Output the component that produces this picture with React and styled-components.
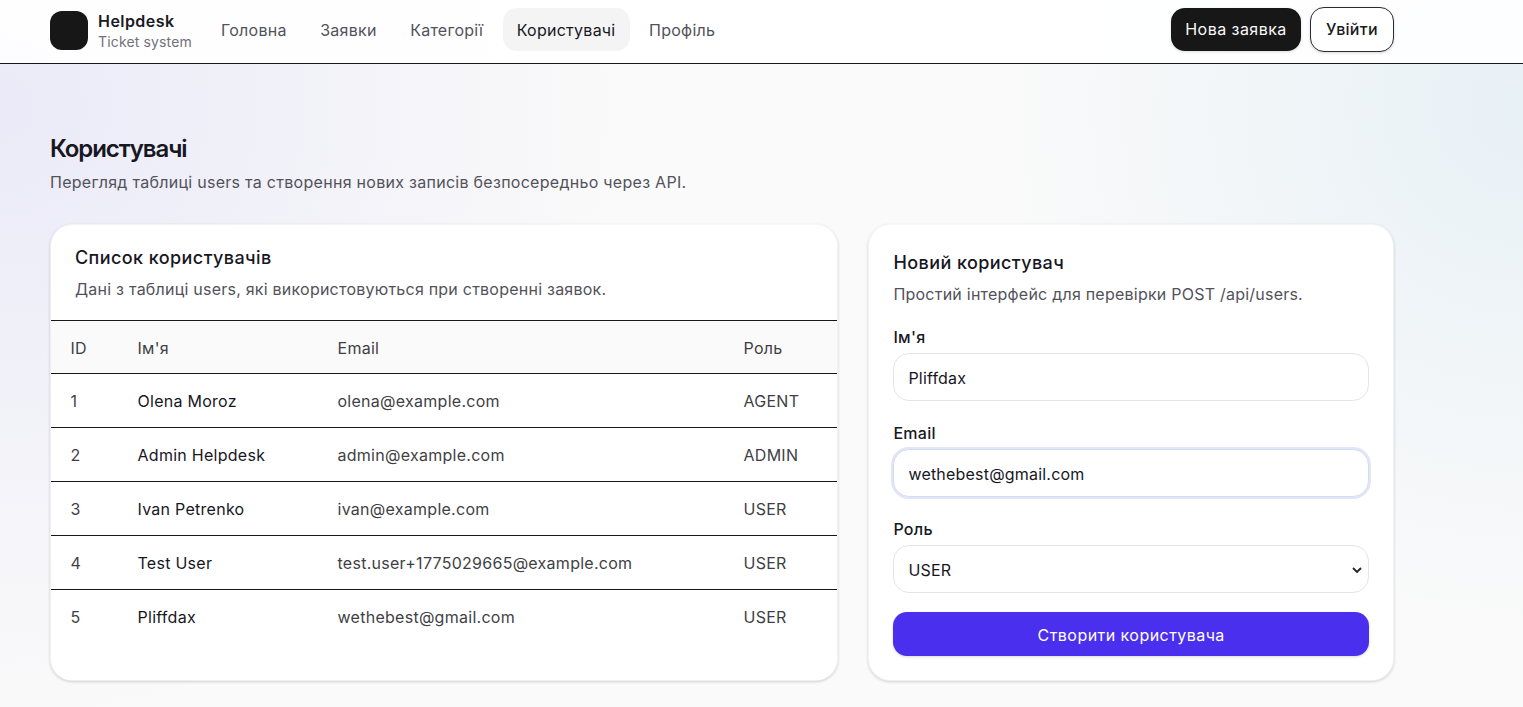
import React from "react";
import styled, { createGlobalStyle } from "styled-components";

const Global = createGlobalStyle`
  * { box-sizing: border-box; }
  html, body { margin: 0; height: 100%; }
  body {
    font-family: Inter, "Noto Sans", sans-serif;
    color: #1a1a22;
    background:
      radial-gradient(circle at 0% 15%, rgba(79, 70, 229, 0.09), transparent 38%),
      radial-gradient(circle at 100% 15%, rgba(14, 130, 200, 0.08), transparent 32%),
      #fafafa;
    min-height: 707px;
    overflow: hidden;
  }
`;

const Header = styled.header`
  height: 64px;
  background: rgba(255, 255, 255, 0.9);
  border-bottom: 1px solid #17171c;
  padding: 6px 129px 0 50px;
  display: flex;
  align-items: flex-start;
  justify-content: space-between;
`;
const Left = styled.div`display: flex; align-items: center; height: 46px;`;
const Brand = styled.div`display: flex; align-items: center; gap: 10px; margin: 2px 15px 0 0;`;
const Logo = styled.div`width: 38px; height: 39px; border-radius: 12px; background: #171717;`;
const BrandText = styled.div`display: flex; flex-direction: column; gap: 1px;`;
const BrandName = styled.div`font-size: 16px; font-weight: 600; line-height: 22px; letter-spacing: 0.45px;`;
const BrandSub = styled.div`font-size: 14px; line-height: 18px; color: #71717a; letter-spacing: 0.15px;`;
const Nav = styled.nav`display: flex; align-items: center; gap: 5.5px;`;
const NavItem = styled.a`
  padding: 1px 14px 0;
  height: 43px;
  display: flex;
  align-items: center;
  border-radius: 14px;
  font-size: 16px;
  letter-spacing: 0.26px;
  color: ${p => (p.$active ? "#17171c" : "#52525b")};
  background: ${p => (p.$active ? "#f4f4f5" : "transparent")};
`;
const Actions = styled.div`display: flex; align-items: center; gap: 9px; height: 46px;`;
const DarkButton = styled.button`
  width: 130px; height: 43px; border: 0; border-radius: 14px; background: #171717; color: #fafafa;
  font: 400 16px Inter, sans-serif; letter-spacing: 0.45px;
  box-shadow: 0 1px 3px rgba(0,0,0,.14);
`;
const OutlineButton = styled.button`
  width: 84px; height: 45px; border: 1px solid #2b2b35; border-radius: 14px; background: #fff; color: #1a1a22;
  font: 500 16px Inter, sans-serif; letter-spacing: 0.3px;
  box-shadow: 0 1px 3px rgba(0,0,0,.16);
`;

const Main = styled.main`width: 1344px; margin-left: 50px; padding-top: 71px;`;
const Title = styled.h1`margin: 0; font-size: 24px; line-height: 28px; font-weight: 600; letter-spacing: -1.1px; color: #17171f;`;
const Subtitle = styled.p`margin: 8px 0 0; font-size: 16px; line-height: 22px; color: #52525b; letter-spacing: 0.28px;`;
const Grid = styled.div`display: grid; grid-template-columns: 1.5fr 1fr; gap: 30px; margin-top: 31px;`;
const Card = styled.section`
  height: 457px;
  background: #fff;
  border: 1px solid rgba(255,255,255,.6);
  background-clip: padding-box;
  border-radius: 22px;
  box-shadow: 0 1px 3px rgba(0,0,0,.17);
  overflow: hidden;
`;
const CardHead = styled.div`padding: 21px 24px 20px 24px;`;
const CardTitle = styled.h2`margin: 0; font-size: 18px; line-height: 24px; font-weight: 500; letter-spacing: 0.42px; color: #17171f;`;
const CardDesc = styled.p`margin: 8px 0 0; font-size: 16px; line-height: 22px; color: #52525b; letter-spacing: 0.23px;`;

const Table = styled.table`width: 100%; border-collapse: collapse; table-layout: fixed; font-size: 16px; letter-spacing: 0.27px;`;
const Th = styled.th`
  text-align: left; font-weight: 400; color: #3f3f46; background: #fafafa;
  height: 53px; padding: 2px 0 0 19.5px;
  border-top: 1px solid #17171c; border-bottom: 1px solid #17171c;
  width: ${p => p.$w}px;
`;
const Tr = styled.tr`&:not(:last-child) td { border-bottom: 1px solid #17171c; }`;
const Td = styled.td`height: 54px; padding: 0 0 0 19.5px; color: ${p => (p.$strong ? "#17171f" : "#3f3f46")}; white-space: nowrap;`;

const FormCard = styled(Card)``;
const FormHead = styled(CardHead)`padding: 26px 24px 0;`;
const Form = styled.form`padding: 21px 24px 0; display: flex; flex-direction: column; gap: 21px;`;
const Field = styled.label`display: flex; flex-direction: column; gap: 5px;`;
const FieldLabel = styled.span`font-size: 16px; line-height: 22px; font-weight: 500; color: #17171f; letter-spacing: 0.3px;`;
const Input = styled.input`
  height: 48px; border: 1px solid #e4e4e7; border-radius: 16px; padding: 2px 14px 0; background: #fff;
  font: 400 16px Inter, sans-serif; letter-spacing: 0.2px; color: #17171f; outline: none; width: 100%;
  ${p => p.$focus && "border-color: #d8dcf0; box-shadow: 0 0 0 2px #e0e5f8;"}
`;
const SelectBox = styled.div`
  position: relative; height: 48px; border: 1px solid #e4e4e7; border-radius: 16px; padding: 2px 14px 0; background: #fff;
  display: flex; align-items: center; font-size: 16px; letter-spacing: 0.2px; color: #17171f;
`;
const Chevron = styled.svg`position: absolute; right: 5px; top: 19px;`;
const Submit = styled.button`
  height: 44px; margin-top: -2px; padding-top: 2px; border: 0; border-radius: 14px; background: #4b2fee; color: #fff;
  font: 400 16px Inter, sans-serif; letter-spacing: 0.45px;
  box-shadow: 0 1px 3px rgba(0,0,0,.14);
`;

const rows = [
  [1, "Olena Moroz", "olena@example.com", "AGENT"],
  [2, "Admin Helpdesk", "admin@example.com", "ADMIN"],
  [3, "Ivan Petrenko", "ivan@example.com", "USER"],
  [4, "Test User", "test.user+1775029665@example.com", "USER"],
  [5, "Pliffdax", "wethebest@gmail.com", "USER"],
];

export default function App() {
  return (
    <>
      <Global />
      <Header>
        <Left>
          <Brand>
            <Logo />
            <BrandText>
              <BrandName>Helpdesk</BrandName>
              <BrandSub>Ticket system</BrandSub>
            </BrandText>
          </Brand>
          <Nav>
            <NavItem>Головна</NavItem>
            <NavItem>Заявки</NavItem>
            <NavItem>Категорії</NavItem>
            <NavItem $active>Користувачі</NavItem>
            <NavItem>Профіль</NavItem>
          </Nav>
        </Left>
        <Actions>
          <DarkButton>Нова заявка</DarkButton>
          <OutlineButton>Увійти</OutlineButton>
        </Actions>
      </Header>
      <Main>
        <Title>Користувачі</Title>
        <Subtitle>Перегляд таблиці users та створення нових записів безпосередньо через API.</Subtitle>
        <Grid>
          <Card>
            <CardHead>
              <CardTitle>Список користувачів</CardTitle>
              <CardDesc>Дані з таблиці users, які використовуються при створенні заявок.</CardDesc>
            </CardHead>
            <Table>
              <thead>
                <tr>
                  <Th $w={67}>ID</Th>
                  <Th $w={200}>Ім'я</Th>
                  <Th $w={406}>Email</Th>
                  <Th>Роль</Th>
                </tr>
              </thead>
              <tbody>
                {rows.map(r => (
                  <Tr key={r[0]}>
                    <Td>{r[0]}</Td>
                    <Td $strong>{r[1]}</Td>
                    <Td>{r[2]}</Td>
                    <Td>{r[3]}</Td>
                  </Tr>
                ))}
              </tbody>
            </Table>
          </Card>
          <FormCard>
            <FormHead>
              <CardTitle>Новий користувач</CardTitle>
              <CardDesc>Простий інтерфейс для перевірки POST /api/users.</CardDesc>
            </FormHead>
            <Form>
              <Field>
                <FieldLabel>Ім'я</FieldLabel>
                <Input defaultValue="Pliffdax" />
              </Field>
              <Field>
                <FieldLabel>Email</FieldLabel>
                <Input $focus defaultValue="wethebest@gmail.com" />
              </Field>
              <Field>
                <FieldLabel>Роль</FieldLabel>
                <SelectBox>
                  USER
                  <Chevron width="12" height="10" viewBox="0 0 12 10" fill="none">
                    <path d="M2 3l4 4 4-4" stroke="#222" strokeWidth="1.8" />
                  </Chevron>
                </SelectBox>
              </Field>
              <Submit type="button">Створити користувача</Submit>
            </Form>
          </FormCard>
        </Grid>
      </Main>
    </>
  );
}
